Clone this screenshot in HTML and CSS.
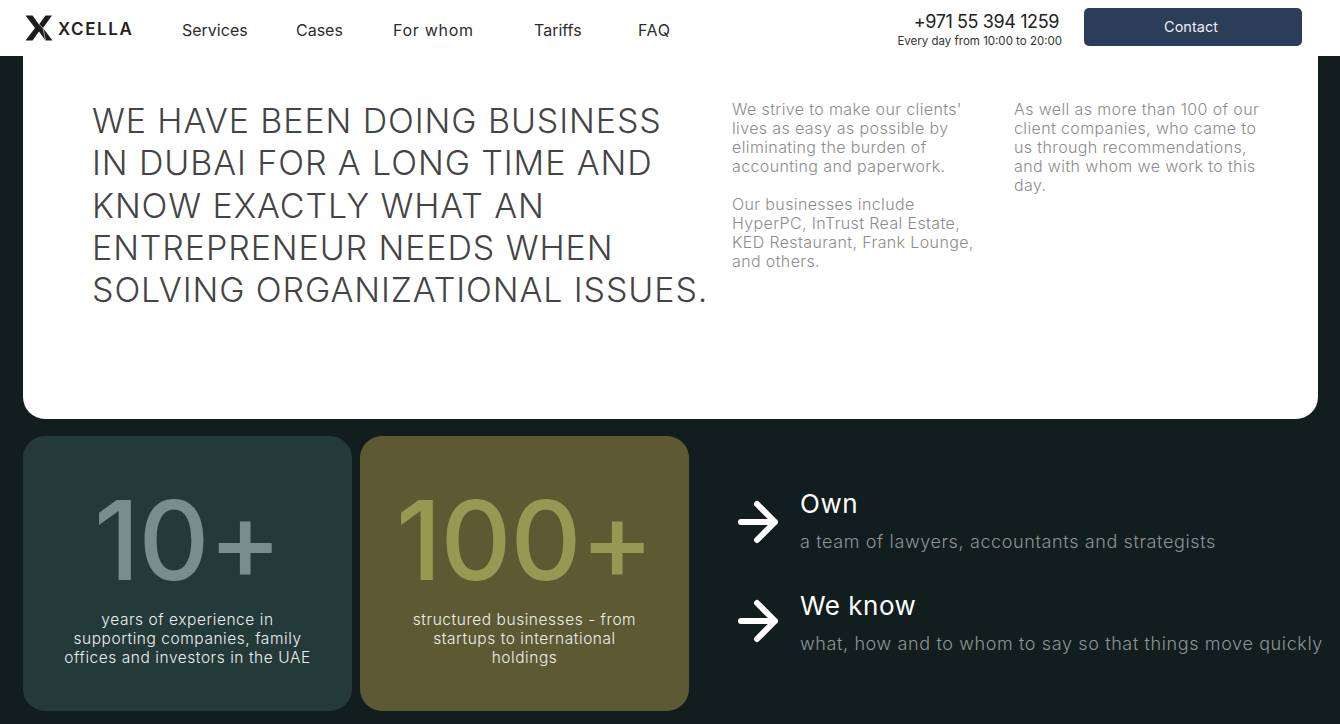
FILE: index.html
```html
<!DOCTYPE html>
<html lang="en">
<head>
    <meta charset="UTF-8">
    <meta name="viewport" content="width=device-width, initial-scale=1.0">
    <title>Xcella</title>
    <link rel="stylesheet" href="styles.css">
</head>
<body>
    <!-- Header -->
    <header class="header">
        <a class="logo" href="#">
            <svg class="logo-mark" width="28" height="26" viewBox="0 0 28 26">
                <path d="M0.5 0.5H7.5L14 9.5L20.5 0.5H27L18 13L27.5 25.5H20.5L14 16.5L7.5 25.5H0.5L10 13Z" fill="#1c1c1c"/>
                <path d="M14 9.500L18 13L20.500 25.500" fill="none" stroke="#fff" stroke-width="0.600"/>
            </svg>
            <span class="logo-text">XCELLA</span>
        </a>
        <nav class="nav">
            <a href="#" class="nav-services">Services</a>
            <a href="#" class="nav-cases">Cases</a>
            <a href="#" class="nav-whom">For whom</a>
            <a href="#" class="nav-tariffs">Tariffs</a>
            <a href="#" class="nav-faq">FAQ</a>
        </nav>
        <div class="phone-block">
            <div class="phone">+971 55 394 1259</div>
            <div class="hours">Every day from 10:00 to 20:00</div>
        </div>
        <button class="contact-btn">Contact</button>
    </header>

    <!-- About panel -->
    <section class="about">
        <h1 class="about-title">WE HAVE BEEN DOING BUSINESS<br>IN DUBAI FOR A LONG TIME AND<br>KNOW EXACTLY WHAT AN<br>ENTREPRENEUR NEEDS WHEN<br>SOLVING ORGANIZATIONAL ISSUES.</h1>
        <div class="about-col">
            <p>We strive to make our clients' lives as easy as possible by eliminating the burden of accounting and paperwork.</p>
            <p>Our businesses include HyperPC, InTrust Real Estate, KED Restaurant, Frank Lounge, and others.</p>
        </div>
        <div class="about-col about-col-last">
            <p>As well as more than 100 of our client companies, who came to us through recommendations, and with whom we work to this day.</p>
        </div>
    </section>

    <!-- Stats -->
    <section class="bottom">
        <div class="card card-green">
            <div class="card-num">10+</div>
            <p class="card-text">years of experience in supporting companies, family offices and investors in the UAE</p>
        </div>
        <div class="card card-olive">
            <div class="card-num">100+</div>
            <p class="card-text">structured businesses - from startups to international holdings</p>
        </div>
        <div class="points">
            <div class="point">
                <svg class="arrow" width="42" height="46" viewBox="0 0 42 46">
                    <path d="M4 23H38M20 5L38 23L20 41" fill="none" stroke="#fff" stroke-width="6" stroke-linecap="round" stroke-linejoin="round"/>
                </svg>
                <div>
                    <h2 class="point-title">Own</h2>
                    <p class="point-text">a team of lawyers, accountants and strategists</p>
                </div>
            </div>
            <div class="point">
                <svg class="arrow arrow-second" width="42" height="46" viewBox="0 0 42 46">
                    <path d="M4 23H38M20 5L38 23L20 41" fill="none" stroke="#fff" stroke-width="6" stroke-linecap="round" stroke-linejoin="round"/>
                </svg>
                <div>
                    <h2 class="point-title">We know</h2>
                    <p class="point-text">what, how and to whom to say so that things move quickly</p>
                </div>
            </div>
        </div>
    </section>
</body>
</html>
```

FILE: styles.css
```css
* {
    box-sizing: border-box;
}

body {
    margin: 0;
    height: 724px;
    overflow: hidden;
    background: #121d1e;
    font-family: 'Inter', 'Liberation Sans', sans-serif;
}

a {
    color: inherit;
    text-decoration: none;
}

/* Header */
.header {
    display: flex;
    align-items: center;
    height: 56px;
    padding-left: 25px;
    background: #fff;
}

.logo {
    display: flex;
    align-items: center;
    width: 157px;
    color: #222;
}

.logo-text {
    margin: 2px 0 0 5px;
    font-size: 17px;
    font-weight: 600;
    letter-spacing: 1.6px;
}

.nav {
    display: flex;
    font-size: 16px;
    color: #2c2c2c;
    margin-top: 3px;
}

.nav-services { width: 114px; }
.nav-cases { width: 97px; }
.nav-whom { width: 141px; letter-spacing: 0.7px; }
.nav-tariffs { width: 104px; }
.nav-faq { width: 60px; letter-spacing: 0.6px; }

.phone-block {
    margin-left: auto;
    margin-right: 22px;
    padding-top: 3px;
    text-align: right;
}

.phone {
    margin-right: 3px;
    font-size: 18px;
    line-height: 22px;
    letter-spacing: -0.4px;
    color: #222;
}

.hours {
    font-size: 11.500px;
    line-height: 16px;
    color: #333;
}

.contact-btn {
    width: 218px;
    height: 38px;
    margin: -2px 38px 0 0;
    padding: 0 10px 2px 6px;
    border: none;
    border-radius: 5px;
    background: #2b3d58;
    color: #eee;
    font-family: inherit;
    font-size: 14.500px;
}

/* About panel */
.about {
    display: flex;
    height: 363px;
    margin: 0 22px 0 23px;
    padding: 44px 0 0 69px;
    background: #fff;
    border-radius: 0 0 22px 22px;
}

.about-title {
    width: 640px;
    margin: 0;
    font-size: 34px;
    font-weight: 300;
    line-height: 42.300px;
    letter-spacing: 0.900px;
    white-space: nowrap;
    color: #444;
}

.about-col {
    width: 282px;
    padding-right: 32px;
    font-size: 16px;
    font-weight: 300;
    line-height: 19px;
    letter-spacing: 0.380px;
    color: #8c8c8c;
}

.about-col p {
    margin: 0 0 19px;
}

/* Stats */
.bottom {
    display: flex;
    margin: 17px 0 0 23px;
}

.card {
    width: 329px;
    height: 275px;
    margin-right: 8px;
    padding-top: 44px;
    border-radius: 22px;
    text-align: center;
}

.card-green {
    background: #243a39;
}

.card-olive {
    background: #5d5a33;
}

.card-num {
    font-size: 110px;
    font-weight: 500;
    line-height: 120px;
    letter-spacing: -1px;
}

.card-green .card-num {
    color: #788e8c;
}

.card-olive .card-num {
    color: #999853;
}

.card-text {
    width: 252px;
    margin: 10px auto 0;
    font-size: 15.500px;
    font-weight: 300;
    line-height: 19px;
    letter-spacing: 0.550px;
    color: #eee;
}

.points {
    margin: 51px 0 0 40px;
}

.point {
    display: flex;
    align-items: center;
    height: 70px;
    margin-bottom: 32px;
    white-space: nowrap;
}

.arrow {
    margin-right: 21px;
    width: 42px;
}

.arrow-second {
    margin-top: -7px;
}

.point-title {
    margin: 0 0 12px;
    font-size: 26px;
    font-weight: 400;
    line-height: 28px;
    letter-spacing: 0.5px;
    color: #fff;
}

.point-text {
    margin: 0;
    font-size: 18px;
    font-weight: 300;
    line-height: 24px;
    letter-spacing: 0.620px;
    color: #8d9595;
}
```
